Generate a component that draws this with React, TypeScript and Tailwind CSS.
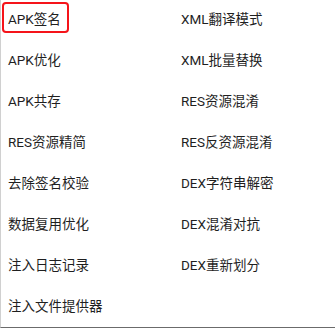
const LEFT = ['APK签名', 'APK优化', 'APK共存', 'RES资源精简', '去除签名校验', '数据复用优化', '注入日志记录', '注入文件提供器'];
const RIGHT = ['XML翻译模式', 'XML批量替换', 'RES资源混淆', 'RES反资源混淆', 'DEX字符串解密', 'DEX混淆对抗', 'DEX重新划分', ''];

export default function App() {
  return (
    <div
      className="relative h-[328px] w-[335px] overflow-hidden border-b border-l border-b-[#6b6b6b] border-l-[#d0d0d0] bg-white text-[13.5px] text-[#1f1f1f]"
      style={{ fontFamily: 'Roboto, "Noto Sans CJK SC", sans-serif' }}
    >
      <div className="-mt-px grid grid-cols-[172px_1fr]">
        {LEFT.map((label, i) => (
          <div key={label} className="contents">
            <div className="flex h-[41px] items-center pl-[7px]">{label}</div>
            <div className="flex h-[41px] items-center pl-[8px]">{RIGHT[i]}</div>
          </div>
        ))}
      </div>
      <div className="absolute left-[1px] top-[2px] h-[31px] w-[67px] rounded-[4px] border-2 border-[#f5141a]" />
    </div>
  );
}
